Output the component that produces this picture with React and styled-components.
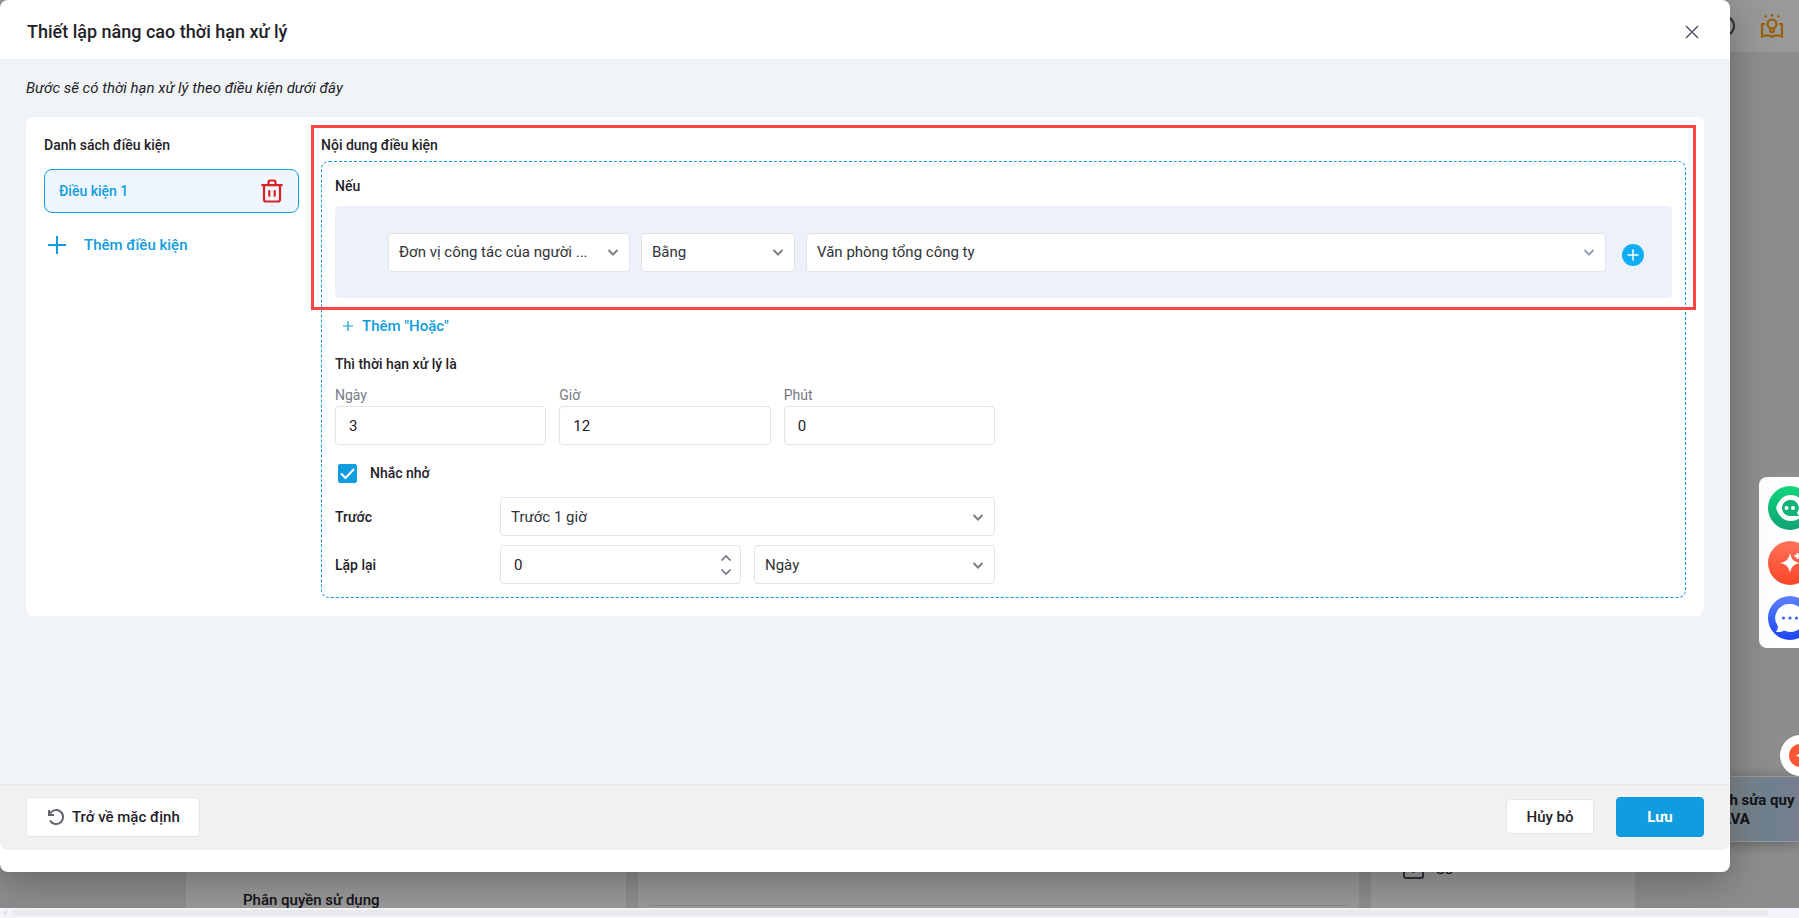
import React, { useState } from "react";
import styled, { createGlobalStyle } from "styled-components";

const GlobalStyle = createGlobalStyle`
  * {
    box-sizing: border-box;
  }
  html,
  body,
  #root {
    height: 100%;
  }
  body {
    margin: 0;
    overflow: hidden;
    color: #1f2229;
    font-family: Roboto, "Noto Sans", sans-serif;
    font-size: 15px;
    line-height: 20px;
  }
  button,
  input,
  select {
    font: inherit;
    color: inherit;
  }
  button {
    cursor: pointer;
  }
`;

/* ---------- page behind the dialog ---------- */

const Page = styled.div`
  position: relative;
  height: 100%;
  overflow: hidden;
  display: flex;
  flex-direction: column;
  background: #eaeceb;
`;

const TopBar = styled.header`
  height: 52px;
  flex: none;
  display: flex;
  justify-content: flex-end;
  align-items: center;
  gap: 24px;
  padding-right: 15px;
  background: #fff;
`;

const Columns = styled.main`
  flex: 1;
  display: grid;
  grid-template-columns: 440fr 720fr 264fr;
  gap: 12px;
  padding: 0 164px 0 186px;
`;

const Column = styled.section`
  display: flex;
  flex-direction: column;
  justify-content: flex-end;
  padding: 0 12px;
  background: #fff;
`;

const ColumnTitle = styled.h3`
  margin: 0;
  padding: 0 45px;
  font-size: 15px;
  font-weight: 500;
  line-height: 16px;
`;

const Divider = styled.hr`
  width: 100%;
  margin: 0 0 2px;
  border: 0;
  border-top: 1px solid #e4e4e4;
`;

const ToolLine = styled.div`
  display: flex;
  align-items: center;
  gap: 12px;
  padding: 0 20px 28px;
`;

const ScrollTrack = styled.div`
  position: relative;
  z-index: 3;
  flex: none;
  height: 10px;
  display: flex;
  align-items: center;
  padding: 0 31px 0 3px;
  gap: 5px;
  background: #f3f4f9;
`;

const ScrollThumb = styled.div`
  flex: 1;
  height: 6px;
  border-radius: 3px;
  background: #e8e9eb;
`;

const AssistCard = styled.aside`
  position: absolute;
  right: 0;
  bottom: 76px;
  width: 100px;
  height: 66px;
  padding: 14px 0 0 21px;
  white-space: nowrap;
  font-weight: 700;
  line-height: 19px;
  border: 1px solid #fff;
  border-right: 0;
  background: linear-gradient(90deg, #d2e2e9 30%, #b8d6ef 72%, #c6d2ee);
  box-shadow: 0 2px 12px rgba(0, 0, 0, 0.3);
`;

const Overlay = styled.div`
  position: absolute;
  inset: 0;
  z-index: 1;
  background: rgba(0, 0, 0, 0.4);
`;

/* ---------- floating launchers ---------- */

const Launcher = styled.nav`
  position: absolute;
  z-index: 2;
  right: -20px;
  top: 477px;
  display: flex;
  flex-direction: column;
  gap: 11px;
  padding: 9px 7px 8px 9px;
  border-radius: 8px;
  background: #fff;
`;

const LauncherButton = styled.button`
  width: 44px;
  height: 44px;
  padding: 0;
  border: 0;
  border-radius: 50%;
  background: linear-gradient(${(props) => props.$from}, ${(props) => props.$to});

  svg {
    display: block;
  }
`;

const Bubble = styled.button`
  position: absolute;
  z-index: 2;
  right: -22px;
  top: 735px;
  width: 41px;
  height: 41px;
  padding: 9px;
  border: 0;
  border-radius: 50%;
  background: #fff;

  svg {
    display: block;
    border-radius: 50%;
    background: #fb5533;
  }
`;

/* ---------- dialog ---------- */

const Dialog = styled.div`
  position: absolute;
  z-index: 2;
  top: 0;
  left: 0;
  right: 69px;
  bottom: 46px;
  display: flex;
  flex-direction: column;
  padding-bottom: 22px;
  border-radius: 8px;
  background: #fff;
  box-shadow: 0 8px 40px rgba(0, 0, 0, 0.3);
`;

const DialogHeader = styled.header`
  flex: none;
  height: 59px;
  display: flex;
  justify-content: space-between;
  align-items: center;
  padding: 5px 30px 0 27px;
`;

const Title = styled.h1`
  margin: 0;
  font-size: 18px;
  font-weight: 500;
  line-height: 24px;
`;

const IconButton = styled.button`
  display: flex;
  padding: 0;
  border: 0;
  background: none;
`;

const AddButton = styled(IconButton)`
  padding-top: 6px;
`;

const DialogBody = styled.div`
  flex: 1;
  padding: 19px 26px 0;
  background: #f0f4f7;
`;

const Hint = styled.p`
  margin: 0 0 19px;
  font-size: 15px;
  font-style: italic;
`;

const Card = styled.div`
  display: flex;
  align-items: flex-start;
  gap: 12px;
  padding: 8px 8px 18px 18px;
  border-radius: 8px;
  background: #fff;
`;

const Sidebar = styled.section`
  flex: none;
  width: 255px;
  padding-top: 10px;
`;

const Heading = styled.h2`
  margin: 0;
  font-size: 14px;
  font-weight: 500;
  line-height: 20px;
`;

const ConditionItem = styled.div`
  display: flex;
  justify-content: space-between;
  align-items: center;
  height: 44px;
  margin: 14px 0 20px;
  padding: 0 15px 0 14px;
  border: 1px solid #109cde;
  border-radius: 8px;
  color: #109cde;
  font-size: 14px;
  font-weight: 500;
  background: #eff6ff;
`;

const LinkButton = styled.button`
  display: flex;
  align-items: center;
  gap: ${(props) => props.$gap}px;
  padding: 0;
  border: 0;
  color: #109cde;
  font-weight: 500;
  line-height: 24px;
  background: none;
`;

const Content = styled.section`
  position: relative;
  flex: 1;
  min-width: 0;
  padding: 10px 10px 0;
`;

const Highlight = styled.div`
  position: absolute;
  top: 0;
  left: 0;
  right: 0;
  height: 185px;
  border: 3px solid #fb4444;
  pointer-events: none;
`;

const RuleBox = styled.div`
  margin-top: 6px;
  padding: 14px 13px 13px;
  border: 1px dashed #109cde;
  border-radius: 8px;
`;

const ConditionPanel = styled.div`
  display: flex;
  align-items: center;
  gap: 11px;
  height: 92px;
  margin: 10px 0 16px;
  padding: 0 23px 0 53px;
  border-radius: 4px;
  background: #edf2fa;
`;

const SelectWrap = styled.div`
  flex: ${(props) => props.$flex || "1"};
  min-width: 0;
  display: grid;
  align-items: center;

  select {
    grid-area: 1 / 1;
    width: 100%;
    height: 39px;
    padding: 0 36px 0 10px;
    appearance: none;
    border: 1px solid #e0e2e6;
    border-radius: 4px;
    color: #2f3238;
    text-overflow: ellipsis;
    background: #fff;
  }
  svg {
    grid-area: 1 / 1;
    justify-self: end;
    margin-right: 11px;
    pointer-events: none;
  }
`;

const OrRow = styled.div`
  padding: 0 8px 16px;
`;

const DurationForm = styled.div`
  width: 660px;
  max-width: 100%;
`;

const Row = styled.div`
  display: flex;
  align-items: center;
  gap: 13px;
  margin-top: ${(props) => props.$top || 0}px;
`;

const Field = styled.label`
  flex: 1;
  min-width: 0;
  color: #757a85;
  font-size: 14px;

  input {
    display: block;
    margin-top: 1px;
    color: #1f2229;
    font-size: 15px;
  }
`;

const TextInput = styled.input`
  width: 100%;
  height: 39px;
  padding: 0 13px;
  border: 1px solid #e0e2e6;
  border-radius: 4px;
  background: #fff;
`;

const CheckLabel = styled.label`
  display: flex;
  align-items: center;
  gap: 13px;
  margin: 18px 0 13px;
  padding-left: 3px;
  font-size: 14px;
  font-weight: 500;
  line-height: 21px;
`;

const CheckBox = styled.span`
  display: grid;

  input,
  svg {
    grid-area: 1 / 1;
    width: 19px;
    height: 19px;
    margin: 0;
  }
  input {
    appearance: none;
    border: 1px solid #109cde;
    border-radius: 2px;
  }
  input:checked {
    background: #109cde;
  }
  svg {
    pointer-events: none;
  }
`;

const RowLabel = styled.label`
  flex: none;
  width: 152px;
  font-size: 14px;
  font-weight: 500;
`;

const NumberWrap = styled.div`
  flex: 1;
  display: grid;
  align-items: center;

  input {
    grid-area: 1 / 1;
  }
`;

const Spinner = styled.div`
  grid-area: 1 / 1;
  justify-self: end;
  display: flex;
  flex-direction: column;
  gap: 6px;
  margin-right: 9px;
`;

const DialogFooter = styled.footer`
  flex: none;
  height: 66px;
  display: flex;
  align-items: center;
  gap: 22px;
  padding: 0 26px 2px;
  border-top: 1px solid #e6e7e9;
  border-radius: 0 0 8px 8px;
  background: #f1f1f1;
`;

const Button = styled.button`
  display: flex;
  justify-content: center;
  align-items: center;
  gap: 6px;
  min-width: 88px;
  height: ${(props) => (props.$small ? 35 : 40)}px;
  padding: 0 ${(props) => (props.$wide ? 19 : 12)}px;
  margin-right: ${(props) => (props.$push ? "auto" : 0)};
  border: 1px solid ${(props) => (props.$primary ? "#109cde" : "#e0e6f0")};
  border-radius: 4px;
  color: ${(props) => (props.$primary ? "#fff" : "#1f2229")};
  font-weight: ${(props) => (props.$primary ? 700 : 500)};
  background: ${(props) => (props.$primary ? "#109cde" : "#fff")};
`;

/* ---------- icons ---------- */

const Stroke = ({ w, h = w, d, color = "currentColor", width = 2, ...rest }) => (
  <svg width={w} height={h} viewBox={`0 0 ${w} ${h}`} fill="none" stroke={color} strokeWidth={width} aria-hidden="true" {...rest}>
    <path d={d} />
  </svg>
);

const Chevron = ({ color = "#7f7f7f" }) => (
  <Stroke w={12} h={10} d="M1.5 3 6 7.5 10.500 3" color={color} />
);

const TrashIcon = () => (
  <svg width="22" height="24" viewBox="0 0 22 24" fill="none" stroke="#dc2127" strokeWidth="2.2" strokeLinecap="round" aria-hidden="true">
    <path d="M1.200 6.200h19.600M7.500 6V2.800a1.300 1.300 0 0 1 1.300-1.300h4.400a1.300 1.300 0 0 1 1.300 1.300V6M3 6.200v14.300a2 2 0 0 0 2 2h12a2 2 0 0 0 2-2V6.200M8.300 12v4.800M13.700 12v4.800" />
  </svg>
);

const BookIcon = () => (
  <svg width="24" height="24" viewBox="0 0 24 24" fill="none" stroke="#ff9e0b" strokeWidth="2.2" aria-hidden="true">
    <path d="M5 10H2v12.500c3.500-1.600 7-1.600 10 .2 3-1.800 6.500-1.800 10-.2V10h-3" />
    <circle cx="12" cy="10" r="4.500" />
    <path d="M10.200 14v2.500a1.800 1.800 0 0 0 3.600 0V14M12 0v2.600M4.800 1.400l1.600 1.800M19.200 1.400l-1.600 1.800" />
  </svg>
);

const Sparkle = ({ size }) => (
  <svg width={size} height={size} viewBox="0 0 44 44" fill="#fff" aria-hidden="true">
    <path d="M22 12c1.500 6.500 3.500 8.500 10 10-6.500 1.500-8.500 3.500-10 10-1.500-6.500-3.500-8.500-10-10 6.500-1.500 8.500-3.500 10-10z" />
    <path d="M26.500 14h2v-2h2v2h2v2h-2v2h-2v-2h-2z" />
  </svg>
);

const Select = ({ options, flex, chevron, ...rest }) => (
  <SelectWrap $flex={flex}>
    <select {...rest}>
      {options.map((option) => (
        <option key={option}>{option}</option>
      ))}
    </select>
    <Chevron color={chevron} />
  </SelectWrap>
);

const App = () => {
  const [remind, setRemind] = useState(true);
  const [repeat, setRepeat] = useState(0);

  return (
    <Page>
      <GlobalStyle />
      <TopBar>
        <Stroke w={24} d="M22 12a10 10 0 1 1-20 0 10 10 0 0 1 20 0z" color="#4e5160" />
        <BookIcon />
      </TopBar>
      <Columns>
        <Column>
          <ColumnTitle>Phân quyền sử dụng</ColumnTitle>
        </Column>
        <Column>
          <Divider />
        </Column>
        <Column>
          <ToolLine>
            <Stroke w={21} h={22} d="M3 2h15a2 2 0 0 1 2 2v14a2 2 0 0 1-2 2H3a2 2 0 0 1-2-2V4a2 2 0 0 1 2-2zM10.500 7v8" color="#4e5160" />
            <span>Số</span>
          </ToolLine>
        </Column>
      </Columns>
      <AssistCard>
        nh sửa quy
        <br />
        AVA
      </AssistCard>
      <ScrollTrack>
        <svg width="4" height="6" viewBox="0 0 4 6" fill="#e0e1e4" aria-hidden="true">
          <path d="M4 0v6L0 3z" />
        </svg>
        <ScrollThumb />
      </ScrollTrack>
      <Overlay />

      <Launcher>
        <LauncherButton $from="#10d67c" $to="#10a374" aria-label="Chat">
          <svg width="44" height="44" viewBox="0 0 44 44" aria-hidden="true">
            <path d="M8 22c3-8 7-13 15-13s13 6 13 13-5 13-13 13S11 30 8 22z" fill="#fff" />
            <path d="M22 14a8 8 0 1 0 0 16h9l-2-3a8 8 0 0 0-7-13z" fill="#13b377" />
            <circle cx="18.500" cy="22" r="2" fill="#fff" />
            <circle cx="25" cy="22" r="2" fill="#fff" />
          </svg>
        </LauncherButton>
        <LauncherButton $from="#ff7359" $to="#f94526" aria-label="AVA">
          <Sparkle size={44} />
        </LauncherButton>
        <LauncherButton $from="#5c81fa" $to="#1c46f5" aria-label="Tin nhắn">
          <svg width="44" height="44" viewBox="0 0 44 44" aria-hidden="true">
            <path d="M22 8a14 14 0 1 1-6 26.500c-2 1.300-5 1.800-8 1.500 1.300-1.500 2-3.500 1.800-6A14 14 0 0 1 22 8z" fill="#fff" />
            <circle cx="15.500" cy="22" r="1.600" fill="#3561f7" />
            <circle cx="22" cy="22" r="1.600" fill="#3561f7" />
            <circle cx="28.500" cy="22" r="1.600" fill="#3561f7" />
          </svg>
        </LauncherButton>
      </Launcher>
      <Bubble aria-label="Trợ lý">
        <Sparkle size={23} />
      </Bubble>

      <Dialog role="dialog" aria-labelledby="dialog-title">
        <DialogHeader>
          <Title id="dialog-title">Thiết lập nâng cao thời hạn xử lý</Title>
          <IconButton aria-label="Đóng">
            <Stroke w={16} d="M2 2l12 12M14 2 2 14" color="#5b5e6e" width={1.6} />
          </IconButton>
        </DialogHeader>

        <DialogBody>
          <Hint>Bước sẽ có thời hạn xử lý theo điều kiện dưới đây</Hint>
          <Card>
            <Sidebar>
              <Heading>Danh sách điều kiện</Heading>
              <ConditionItem>
                <span>Điều kiện 1</span>
                <IconButton aria-label="Xóa điều kiện">
                  <TrashIcon />
                </IconButton>
              </ConditionItem>
              <LinkButton $gap={14}>
                <Stroke w={26} h={18} d="M13 0v18M4 9h18" />
                Thêm điều kiện
              </LinkButton>
            </Sidebar>

            <Content>
              <Heading>Nội dung điều kiện</Heading>
              <RuleBox>
                <Heading>Nếu</Heading>
                <ConditionPanel>
                  <Select flex="0 0 242px" aria-label="Trường" options={["Đơn vị công tác của người ..."]} />
                  <Select flex="0 0 154px" aria-label="Phép so sánh" options={["Bằng"]} />
                  <Select aria-label="Giá trị" chevron="#9a9db8" options={["Văn phòng tổng công ty"]} />
                  <AddButton aria-label="Thêm">
                    <svg width="32" height="22" viewBox="0 0 32 22" aria-hidden="true">
                      <circle cx="16" cy="11" r="11" fill="#10aef5" />
                      <path d="M16 5.500v11M10.500 11h11" stroke="#fff" strokeWidth="1.500" />
                    </svg>
                  </AddButton>
                </ConditionPanel>
                <OrRow>
                  <LinkButton $gap={9}>
                    <Stroke w={10} d="M5 0v10M0 5h10" width={1.2} />
                    Thêm "Hoặc"
                  </LinkButton>
                </OrRow>
                <Heading>Thì thời hạn xử lý là</Heading>

                <DurationForm>
                  <Row $top={11}>
                    <Field>
                      Ngày
                      <TextInput defaultValue="3" />
                    </Field>
                    <Field>
                      Giờ
                      <TextInput defaultValue="12" />
                    </Field>
                    <Field>
                      Phút
                      <TextInput defaultValue="0" />
                    </Field>
                  </Row>
                  <CheckLabel>
                    <CheckBox>
                      <input type="checkbox" checked={remind} onChange={() => setRemind((prev) => !prev)} />
                      <Stroke w={19} d="M3 9.500l4.500 4.500L16 5" color="#fff" />
                    </CheckBox>
                    Nhắc nhở
                  </CheckLabel>
                  <Row>
                    <RowLabel htmlFor="before">Trước</RowLabel>
                    <Select id="before" options={["Trước 1 giờ"]} />
                  </Row>
                  <Row $top={9}>
                    <RowLabel htmlFor="repeat">Lặp lại</RowLabel>
                    <NumberWrap>
                      <TextInput id="repeat" value={repeat} onChange={(e) => setRepeat(Number(e.target.value) || 0)} />
                      <Spinner>
                        <IconButton aria-label="Tăng" onClick={() => setRepeat((prev) => prev + 1)}>
                          <Stroke w={12} h={8} d="M1.500 6.500 6 2l4.500 4.500" color="#6f7080" width={1.6} />
                        </IconButton>
                        <IconButton aria-label="Giảm" onClick={() => setRepeat((prev) => Math.max(0, prev - 1))}>
                          <Stroke w={12} h={8} d="M1.500 1.500 6 6l4.500-4.500" color="#6f7080" width={1.6} />
                        </IconButton>
                      </Spinner>
                    </NumberWrap>
                    <Select aria-label="Đơn vị lặp" options={["Ngày"]} />
                  </Row>
                </DurationForm>
              </RuleBox>
              <Highlight />
            </Content>
          </Card>
        </DialogBody>

        <DialogFooter>
          <Button $wide $push>
            <Stroke w={20} d="M3 3v5h5M3.600 7.500A7 7 0 1 1 4 13.500" color="#62656c" />
            Trở về mặc định
          </Button>
          <Button $small>Hủy bỏ</Button>
          <Button $primary>Lưu</Button>
        </DialogFooter>
      </Dialog>
    </Page>
  );
};

export default App;
